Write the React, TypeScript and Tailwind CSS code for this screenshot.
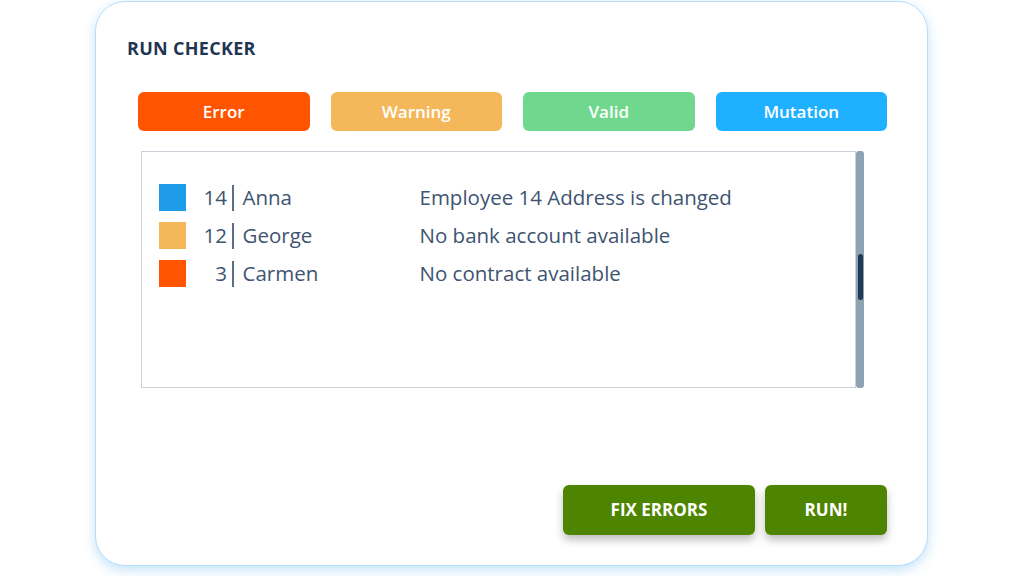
const FONT = { fontFamily: '"Source Sans Pro", "Open Sans", "Noto Sans", sans-serif' }

const FILTERS = [
  { label: 'Error', cls: 'bg-[#ff5500]' },
  { label: 'Warning', cls: 'bg-[#f4b85a]' },
  { label: 'Valid', cls: 'bg-[#6fd88e]' },
  { label: 'Mutation', cls: 'bg-[#1fb0ff]' },
]

const ROWS = [
  { id: 14, name: 'Anna', msg: 'Employee 14 Address is changed', cls: 'bg-[#1e9be9]' },
  { id: 12, name: 'George', msg: 'No bank account available', cls: 'bg-[#f4b85a]' },
  { id: 3, name: 'Carmen', msg: 'No contract available', cls: 'bg-[#ff5500]' },
]

export default function App() {
  return (
    <div className="w-[1024px] h-[576px] bg-white overflow-hidden" style={FONT}>
      <div className="ml-[95px] mt-[1px] w-[833px] h-[565px] rounded-[30px] border border-[#b5defc] bg-white shadow-[0_4px_12px_rgba(120,190,240,0.45)] flex flex-col pl-[31px] pr-[40px]">
        <h1 className="mt-[35px] text-[18px] leading-[22px] font-bold tracking-[0.3px] text-[#1f3652]">RUN CHECKER</h1>

        <div className="mt-[33px] ml-[11px] flex gap-[21px]">
          {FILTERS.map(f => (
            <div key={f.label}
              className={`${f.cls} w-[172px] h-[39px] rounded-[6px] flex items-center justify-center text-white text-[17px] font-semibold`}>
              {f.label}
            </div>
          ))}
        </div>

        <div className="mt-[20px] ml-[14px] w-[723px] h-[237px] flex">
          <div className="flex-1 border border-[#c9d2db] pt-[32px] pl-[17px] flex flex-col gap-[11px]">
            {ROWS.map(r => (
              <div key={r.id} className="flex items-center h-[27px] text-[20.5px] text-[#3e5470]">
                <div className={`${r.cls} w-[27px] h-[27px]`} />
                <span className="w-[41px] text-right">{r.id}</span>
                <span className="w-[1.5px] h-[26px] bg-[#5a6d85] ml-[5px] mr-[9px]" />
                <span className="w-[177px]">{r.name}</span>
                <span>{r.msg}</span>
              </div>
            ))}
          </div>
          <div className="w-[8px] h-full rounded-[3px] bg-[#8ea2b2] flex flex-col items-center pt-[103px]">
            <div className="w-[5px] h-[46px] rounded-full bg-[#1e3a56]" />
          </div>
        </div>

        <div className="mt-auto mb-[30px] flex justify-end gap-[10px]">
          <button className="w-[192px] h-[50px] rounded-[6px] bg-[#4e8500] text-white text-[17px] font-bold shadow-[0_5px_8px_rgba(0,0,0,0.25)]">FIX ERRORS</button>
          <button className="w-[122px] h-[50px] rounded-[6px] bg-[#4e8500] text-white text-[17px] font-bold shadow-[0_5px_8px_rgba(0,0,0,0.25)]">RUN!</button>
        </div>
      </div>
    </div>
  )
}
